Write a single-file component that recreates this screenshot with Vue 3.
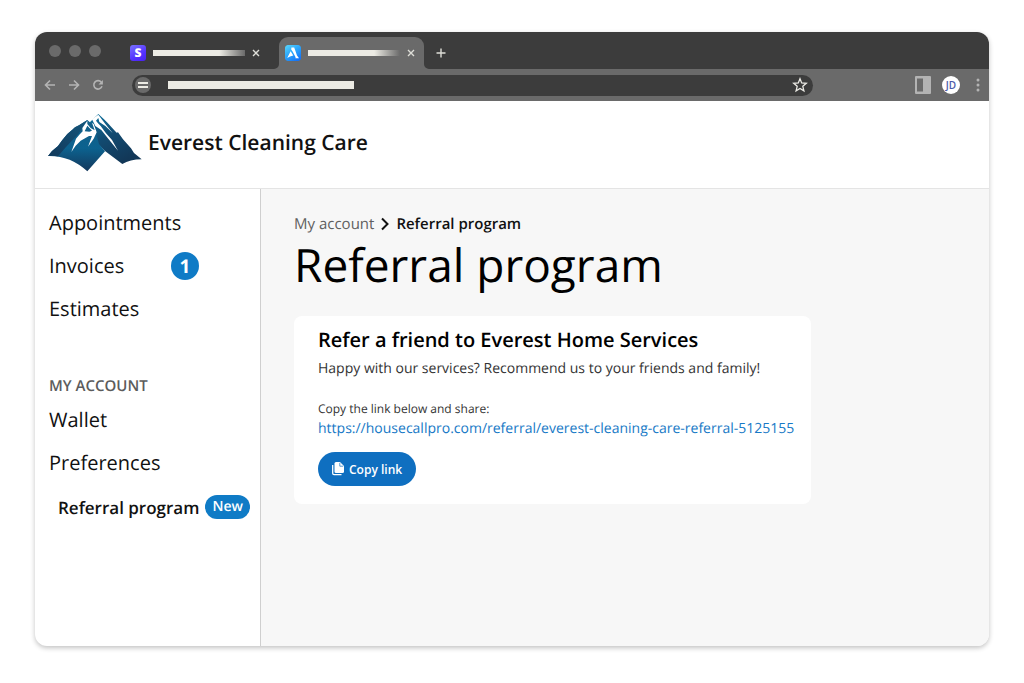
<script setup>
const menu = [
  { label: 'Appointments' },
  { label: 'Invoices', count: 1 },
  { label: 'Estimates' },
]
const account = [{ label: 'Wallet' }, { label: 'Preferences' }]
</script>

<template>
  <div class="page">
    <div class="window">
      <div class="tabbar">
        <div class="lights"><i></i><i></i><i></i></div>
        <div class="tab first">
          <span class="favicon stripe">S</span>
          <span class="bar"></span>
          <button class="icon-btn close" aria-label="Close tab">
            <svg width="8" height="8" viewBox="0 0 8 8"><path d="M1 1l6 6M7 1L1 7" stroke="#deded8" stroke-width="1.4" /></svg>
          </button>
        </div>
        <div class="tab active">
          <svg class="flare left" width="5" height="5" viewBox="0 0 5 5"><path d="M5 0A5 5 0 0 1 0 5H5Z" fill="#6a6a6a" /></svg>
          <svg class="flare right" width="5" height="5" viewBox="0 0 5 5"><path d="M0 0A5 5 0 0 0 5 5H0Z" fill="#6a6a6a" /></svg>
          <svg class="favicon" viewBox="0 0 16 16">
            <defs>
              <linearGradient id="sky" x1="0" y1="0" x2=".7" y2="1">
                <stop offset="0" stop-color="#5ad8fb" /><stop offset=".55" stop-color="#2aa3fb" /><stop offset="1" stop-color="#1674f6" />
              </linearGradient>
            </defs>
            <rect width="16" height="16" rx="2.5" fill="url(#sky)" />
            <path d="M6.4 2.5H9.2L12 10.6L14 13.2H10.4L10.6 12.3L7.6 6.4L6.2 4.4Z" fill="#fff" />
            <path d="M5.6 6.3L8.3 10.4L6.5 11.1L5 11.4L2.2 13Z" fill="#fff" />
          </svg>
          <span class="bar"></span>
          <button class="icon-btn close" aria-label="Close tab">
            <svg width="8" height="8" viewBox="0 0 8 8"><path d="M1 1l6 6M7 1L1 7" stroke="#deded8" stroke-width="1.4" /></svg>
          </button>
        </div>
        <button class="icon-btn new-tab" aria-label="New tab">
          <svg width="10" height="10" viewBox="0 0 10 10"><path d="M5 .5v9M.5 5h9" stroke="#deded8" stroke-width="1.4" /></svg>
        </button>
      </div>

      <div class="toolbar">
        <div class="history">
          <button class="icon-btn" aria-label="Back">
            <svg width="12" height="12" viewBox="0 0 12 12" fill="none" stroke="#b4b4b4" stroke-width="1.6"><path d="M11 6H1.5M6 1.5L1.5 6L6 10.5" /></svg>
          </button>
          <button class="icon-btn" aria-label="Forward">
            <svg width="12" height="12" viewBox="0 0 12 12" fill="none" stroke="#b4b4b4" stroke-width="1.6"><path d="M1 6h9.5M6 1.5L10.5 6L6 10.5" /></svg>
          </button>
          <button class="icon-btn" aria-label="Reload">
            <svg width="12" height="12" viewBox="0 0 12 12" fill="none"><path d="M9.3 3.2A4.2 4.2 0 1 0 10 7.3" stroke="#b4b4b4" stroke-width="1.6" /><path d="M10.9 1v4.4H6.5Z" fill="#b4b4b4" /></svg>
          </button>
        </div>
        <div class="address">
          <span class="site"><i></i><i></i></span>
          <span class="url"></span>
          <button class="icon-btn star" aria-label="Bookmark">
            <svg width="16" height="16" viewBox="0 0 16 16" fill="none" stroke="#ecebe6" stroke-width="1.3"><path d="M8 1.7L9.7 6L14.3 6.3L10.8 9.3L11.9 13.9L8 11.4L4.1 13.9L5.2 9.3L1.7 6.3L6.3 6Z" /></svg>
          </button>
        </div>
        <button class="icon-btn panel" aria-label="Side panel">
          <svg width="16" height="18" viewBox="0 0 16 18"><rect width="16" height="18" rx="1" fill="#b3b3b3" /><rect x="2" y="2.5" width="6" height="13" fill="#6a6a6a" /></svg>
        </button>
        <button class="avatar">JD</button>
        <button class="icon-btn more" aria-label="Menu">
          <svg width="4" height="14" viewBox="0 0 4 14" fill="#b4b4b4"><circle cx="2" cy="2" r="1.5" /><circle cx="2" cy="7" r="1.5" /><circle cx="2" cy="12" r="1.5" /></svg>
        </button>
      </div>

      <header class="brand">
        <svg width="94" height="58" viewBox="54 42 282 174" aria-hidden="true">
          <defs>
            <linearGradient id="face" x1="0" y1="0" x2="0" y2="1">
              <stop offset="0" stop-color="#125f88" /><stop offset=".55" stop-color="#0c628f" /><stop offset="1" stop-color="#14385c" />
            </linearGradient>
            <linearGradient id="peak" x1="0" y1="0" x2=".6" y2="1">
              <stop offset="0" stop-color="#0d78a5" /><stop offset=".5" stop-color="#124a70" /><stop offset="1" stop-color="#123757" />
            </linearGradient>
            <linearGradient id="ridge" x1="1" y1="0" x2="0" y2="1">
              <stop offset="0" stop-color="#14567c" /><stop offset="1" stop-color="#12395b" />
            </linearGradient>
          </defs>
          <path d="M205 42L222 58L231 67L255 93L260 98L264 97L279 118L303 145L312 159L335 178Q300 178 277 192L225 153L186 114L174 72Z" fill="url(#peak)" />
          <path d="M172 60L186 72L198 99L207 132L225 154L172 214Q120 166 54 168L66 153L84 138L97 120L112 102L126 90L135 82L147 76Z" fill="url(#face)" />
          <path d="M172 60L145 102L108 141L84 169Q69 166 54 168L66 153L84 138L97 120L112 102L126 90L135 82L147 76Z" fill="url(#ridge)" />
          <path d="M205 44L186 58L196 78L214 90L230 110L264 152L246 120L228 100L212 78L204 70L198 62L205 54L208 66L226 78L248 99L226 72Z" fill="#fff" />
          <path d="M172 62L157 84L158 94L148 104L138 116L124 156L137 137L152 122L177 108L186 108L174 140L191 116L200 97L191 72L186 68L194 91L182 84L172 72ZM172 77L186 92L178 95L164 94Z" fill="#fff" fill-rule="evenodd" />
        </svg>
        <span>Everest Cleaning Care</span>
      </header>

      <div class="body">
        <nav class="sidebar">
          <a v-for="item in menu" :key="item.label" href="#" class="item">
            <span class="label">{{ item.label }}</span>
            <b v-if="item.count" class="count">{{ item.count }}</b>
          </a>
          <h2>MY ACCOUNT</h2>
          <a v-for="item in account" :key="item.label" href="#" class="item">{{ item.label }}</a>
          <a href="#" class="item current">Referral program <b class="new">New</b></a>
        </nav>

        <main>
          <div class="crumbs">
            <a href="#">My account</a>
            <svg width="8" height="14" viewBox="0 0 8 14" fill="none"><path d="M1 1.5L6.5 7L1 12.5" stroke="#111" stroke-width="2" /></svg>
            <b>Referral program</b>
          </div>
          <h1>Referral program</h1>
          <section class="card">
            <h3>Refer a friend to Everest Home Services</h3>
            <p class="lead">Happy with our services? Recommend us to your friends and family!</p>
            <p class="hint">Copy the link below and share:</p>
            <a class="link" href="#">https://housecallpro.com/referral/everest-cleaning-care-referral-5125155</a>
            <button class="copy">
              <svg width="12" height="14" viewBox="0 0 12 14"><path d="M4 0H8L12 4V9.5Q12 11 10.5 11H4Q2.5 11 2.5 9.5V1.5Q2.5 0 4 0Z" fill="#fff" /><path d="M7.8 .8V4.2H11.2" fill="none" stroke="#0f6fc0" stroke-width=".7" /><path d="M.7 3V11.3Q.7 12.6 2 12.6H9.5" fill="none" stroke="#fff" stroke-width="1.3" /></svg>
              Copy link
            </button>
          </section>
        </main>
      </div>
    </div>
  </div>
</template>

<style>
body { background: #fff; }
</style>

<style scoped>
* { box-sizing: border-box; }
.page {
  display: flex;
  min-height: 100vh;
  padding: 32px 35px 37px;
  font-family: "Open Sans", sans-serif;
  text-rendering: geometricPrecision;
  color: #111;
}
.window {
  display: flex;
  flex-direction: column;
  flex: 1;
  border-radius: 12px;
  overflow: hidden;
  background: #fff;
  box-shadow: 0 2px 5px rgba(0, 0, 0, .24);
}
a { color: inherit; text-decoration: none; }
button { font-family: inherit; border: 0; padding: 0; cursor: pointer; }
h1, h2, h3, p { margin: 0; }
.icon-btn { background: none; display: flex; align-items: center; justify-content: center; flex: none; }

.tabbar { display: flex; align-items: flex-end; height: 37px; background: #3c3c3c; }
.lights { display: flex; gap: 8px; align-self: center; width: 89px; padding-left: 14px; }
.lights i { width: 12px; height: 12px; border-radius: 50%; background: #6a6a6a; }
.tab { position: relative; display: flex; align-items: center; height: 32px; flex: none; }
.first { width: 155px; padding-left: 6px; }
.active { width: 145px; padding-left: 6px; background: #6a6a6a; border-radius: 9px 9px 0 0; }
.flare { position: absolute; bottom: 0; }
.flare.left { right: 100%; }
.flare.right { left: 100%; }
.favicon { width: 16px; height: 16px; flex: none; border-radius: 3px; }
.stripe { background: linear-gradient(150deg, #7a73ff, #5433ff 60%, #4a20f0); color: #fff; font-size: 12px; line-height: 16px; font-weight: 800; text-align: center; }
.bar { width: 92px; height: 6px; margin-left: 7px; background: linear-gradient(90deg, #ecebe4 72%, transparent); }
.first .bar { background: linear-gradient(90deg, #ecebe4 72%, #6a6a6a); }
.close { margin-left: 7px; }
.new-tab { width: 34px; height: 32px; }

.toolbar { display: flex; align-items: center; height: 32px; padding-right: 9px; background: #6a6a6a; }
.history { display: flex; gap: 12px; width: 97px; padding-left: 9px; }
.address { display: flex; align-items: center; flex: 1; height: 21px; padding: 0 5px 0 3px; border-radius: 11px; background: #3c3c3c; }
.site { display: flex; flex-direction: column; align-items: center; justify-content: center; gap: 2px; width: 16px; height: 16px; border-radius: 50%; background: #6a6a6a; }
.site i { width: 10px; height: 2px; background: #ecebe4; }
.url { width: 186px; height: 8px; margin-left: 17px; background: #ecebe4; }
.star { margin-left: auto; }
.panel { margin-left: 102px; }
.avatar { width: 18px; height: 18px; margin: 0 16px 0 11px; border-radius: 50%; background: #fff; color: #4a5aa8; font-size: 10px; line-height: 18px; font-weight: 600; }

.brand { display: flex; align-items: center; gap: 6px; height: 88px; padding: 0 13px 4px; border-bottom: 1px solid #e4e4e4; background: #fff; font-size: 21px; font-weight: 600; }
.body { display: flex; flex: 1; }
.sidebar { width: 226px; flex: none; padding: 12px 9px 0 14px; border-right: 1px solid #cfcfcf; }
.item { display: flex; align-items: center; height: 43px; font-size: 20px; }
.label { width: 122px; }
.count { width: 28px; height: 28px; border-radius: 50%; background: #0f7bc6; color: #fff; font-size: 19px; line-height: 28px; text-align: center; }
.sidebar h2 { margin-top: 45px; font-size: 15px; line-height: 22px; font-weight: 600; color: #5c5c5c; }
.sidebar h2 + .item { margin-top: 1px; }
.item.current { height: 46px; padding-left: 9px; gap: 6px; font-size: 17px; font-weight: 600; white-space: nowrap; }
.new { padding: 0 7px; border-radius: 12px; background: #0f7bc6; color: #fff; font-size: 14px; line-height: 24px; font-weight: 600; }

main { flex: 1; padding: 24px 33px 32px; background: #f7f7f7; }
.crumbs { display: flex; align-items: center; gap: 7px; font-size: 15px; line-height: 22px; color: #606060; }
.crumbs b { font-weight: 600; color: #111; }
h1 { font-size: 46px; line-height: 60px; font-weight: 400; color: #000; }
.card { display: flex; flex-direction: column; align-items: flex-start; max-width: 517px; margin-top: 21px; padding: 9px 24px 18px; border-radius: 8px; background: #fff; }
.card h3 { font-size: 20px; line-height: 30px; font-weight: 600; color: #000; }
.lead { font-size: 14px; line-height: 28px; color: #333; }
.hint { margin-top: 16px; font-size: 12px; line-height: 20px; color: #333; }
.link { font-size: 14px; line-height: 20px; color: #1779c6; white-space: nowrap; }
.copy { display: flex; align-items: center; gap: 5px; height: 34px; margin-top: 13px; padding: 0 14px; border-radius: 17px; background: #0f6fc0; color: #fff; font-size: 12px; font-weight: 600; }
</style>
